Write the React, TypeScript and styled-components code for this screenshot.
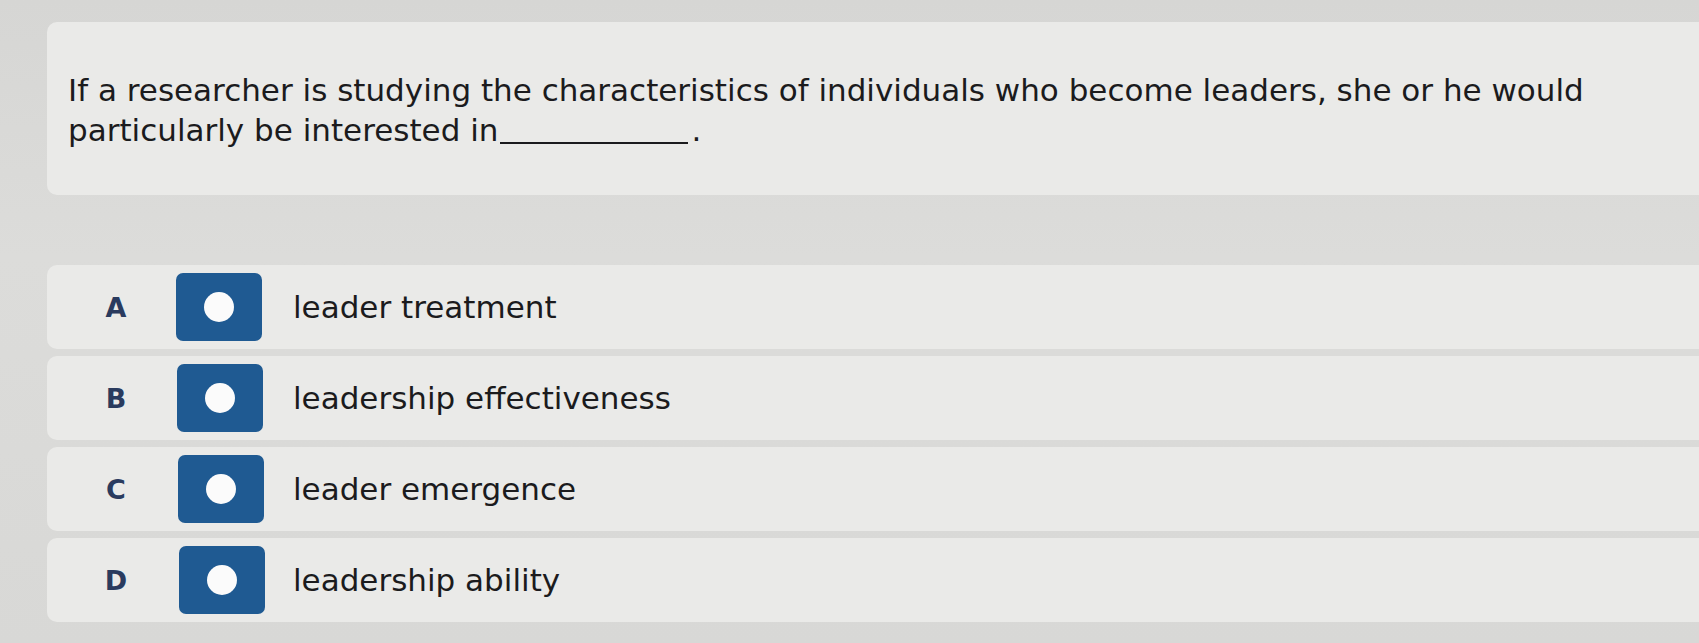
import React from "react";
import styled, { createGlobalStyle } from "styled-components";

const GlobalStyle = createGlobalStyle`
  html, body {
    margin: 0;
    padding: 0;
    background: #d9d9d7;
    overflow: hidden;
  }
  body {
    font-family: "DejaVu Sans", Verdana, sans-serif;
    color: #1d1d1f;
  }
`;

const Page = styled.div`
  width: 1699px;
  height: 643px;
  box-sizing: border-box;
  padding: 22px 0 0 47px;
  display: flex;
  flex-direction: column;
  background: linear-gradient(180deg, #d6d6d4 0%, #dcdcda 40%, #d8d8d6 100%);
`;

const QuestionCard = styled.div`
  background: #eaeae8;
  border-radius: 10px 0 0 10px;
  padding: 48px 40px 45px 21px;
`;

const QuestionText = styled.p`
  margin: 0;
  font-size: 31px;
  line-height: 40px;
  color: #1b1b1d;
  max-width: 1560px;
`;

const Blank = styled.span`
  display: inline-block;
  width: 188px;
  height: 0;
  margin: 0 3px -3px 2px;
  border-bottom: 2px solid #1b1b1d;
  vertical-align: baseline;
`;

const OptionList = styled.div`
  margin-top: 70px;
  display: flex;
  flex-direction: column;
  gap: 7px;
`;

const OptionRow = styled.div`
  height: 84px;
  box-sizing: border-box;
  background: #eaeae8;
  border-radius: 10px 0 0 10px;
  display: grid;
  grid-template-columns: 90px 86px 1fr;
  column-gap: 15px;
  align-items: center;
  padding-left: 24px;
`;

const Letter = styled.span`
  text-align: center;
  font-weight: 700;
  font-size: 27px;
  color: #2a3b5e;
`;

const RadioBox = styled.span<{ $shift: number }>`
  width: 86px;
  height: 68px;
  border-radius: 7px;
  background: #1f5a92;
  display: flex;
  align-items: center;
  justify-content: center;
  margin-left: ${(p) => p.$shift}px;
`;

const RadioDot = styled.span`
  width: 30px;
  height: 30px;
  border-radius: 50%;
  background: #fbfbfb;
`;

const OptionText = styled.span`
  margin-left: 16px;
  font-size: 31px;
  color: #1b1b1d;
`;

const options = [
  { key: "A", text: "leader treatment", shift: 0 },
  { key: "B", text: "leadership effectiveness", shift: 1 },
  { key: "C", text: "leader emergence", shift: 2 },
  { key: "D", text: "leadership ability", shift: 3 },
];

export default function App() {
  return (
    <>
      <GlobalStyle />
      <Page>
        <QuestionCard>
          <QuestionText>
            If a researcher is studying the characteristics of individuals who
            become leaders, she or he would particularly be interested in
            <Blank />.
          </QuestionText>
        </QuestionCard>
        <OptionList>
          {options.map((o) => (
            <OptionRow key={o.key}>
              <Letter>{o.key}</Letter>
              <RadioBox $shift={o.shift}>
                <RadioDot />
              </RadioBox>
              <OptionText>{o.text}</OptionText>
            </OptionRow>
          ))}
        </OptionList>
      </Page>
    </>
  );
}
